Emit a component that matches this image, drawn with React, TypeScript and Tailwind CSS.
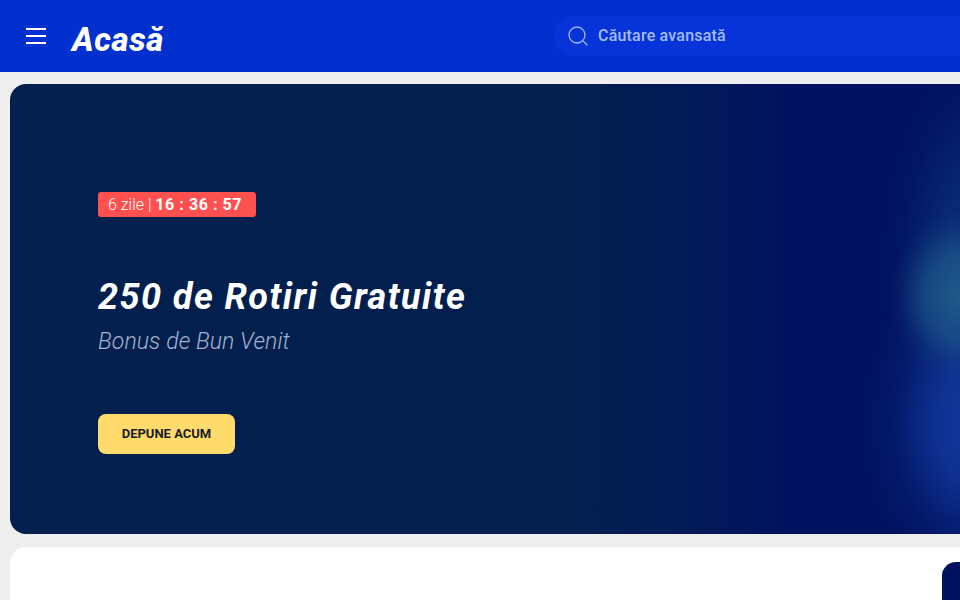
import { Search } from "lucide-react";

function Header() {
	return (
		<header className="h-[72px] bg-[#0230cf] flex items-center overflow-hidden">
			<button className="ml-[26px] w-5 shrink-0 flex flex-col gap-[5px] -mt-[1px]">
				<span className="block h-[2px] bg-white" />
				<span className="block h-[2px] bg-white" />
				<span className="block h-[2px] bg-white" />
			</button>
			<h1 className="ml-[26px] w-[482px] shrink-0 text-[33px] leading-none font-extrabold italic text-white tracking-[0.6px] mt-[6px]">Acasă</h1>
			<div className="flex-1 h-10 bg-[#0634d9] rounded-l-[20px] flex items-center pl-3 text-[#a3bcfb]">
				<Search size={24} strokeWidth={1.3} />
				<span className="ml-2 text-[16px] font-medium tracking-[0.2px]">Căutare avansată</span>
			</div>
		</header>
	);
}

function Hero() {
	return (
		<section className="h-[450px] rounded-l-2xl pl-[88px] pt-[108px] bg-[radial-gradient(ellipse_70px_85px_at_100%_47%,rgba(34,96,140,0.9)_0%,rgba(30,88,138,0.65)_50%,rgba(24,76,135,0.2)_80%,rgba(24,76,135,0)_100%),radial-gradient(ellipse_120px_170px_at_102%_76%,#113a9e_0%,rgba(16,54,154,0.85)_35%,rgba(8,34,122,0.4)_72%,rgba(0,18,96,0)_100%),radial-gradient(ellipse_105px_230px_at_102%_42%,rgba(14,58,130,0.95)_0%,rgba(10,46,118,0.7)_45%,rgba(4,28,104,0.3)_78%,rgba(0,18,96,0)_100%),linear-gradient(90deg,#031f4e_0%,#031f4e_58%,#021b56_70%,#00125f_82%,#00125f_100%)]">
			<div className="w-[158px] h-[25px] rounded-[3px] bg-[#ff5050] text-white text-[16px] leading-[25px] pl-[10px] whitespace-nowrap">
				<span className="font-light">6 zile | </span>
				<span className="font-bold tracking-[0.55px]">16 : 36 : 57</span>
			</div>
			<h2 className="mt-[60px] text-[36px] leading-10 font-bold italic text-white tracking-[1.45px] whitespace-nowrap">250 de Rotiri Gratuite</h2>
			<p className="mt-[11px] text-[23px] leading-7 font-light italic text-[#a3b3cf] tracking-[0.1px]">Bonus de Bun Venit</p>
			<button className="mt-[58px] w-[137px] h-10 rounded-lg bg-[#ffdb6b] text-[#1b1b25] text-[13px] font-bold">DEPUNE ACUM</button>
		</section>
	);
}

export default function App() {
	return (
		<div className="h-[600px] overflow-hidden bg-[#eeeeee] font-['Roboto',sans-serif]">
			<Header />
			<main className="pl-[10px] pt-3">
				<Hero />
				<section className="mt-[13px] h-[60px] bg-white rounded-tl-2xl flex justify-end pt-[15px]">
					<div className="w-[18px] h-[60px] bg-[#00125f] rounded-tl-[14px]" />
				</section>
			</main>
		</div>
	);
}
